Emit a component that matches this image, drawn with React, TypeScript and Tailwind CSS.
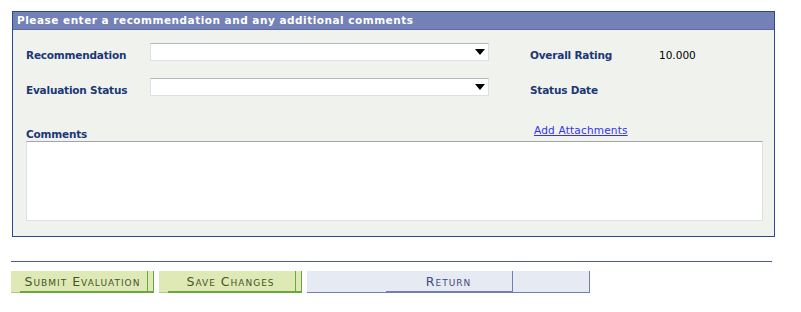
import React from "react";

const font = { fontFamily: '"DejaVu Sans", Verdana, sans-serif' };

function Select() {
  return (
    <div className="relative w-[339px] h-[18px] bg-white border border-[#dcdfe3] border-t-[#b4b8be]">
      <svg className="absolute right-[3px] top-[5px]" width="10" height="6" viewBox="0 0 10 6">
        <path d="M0 0 H10 L5 6 Z" fill="#000" />
      </svg>
    </div>
  );
}

const label = "text-[10.5px] leading-[13px] font-bold text-[#1c3776] tracking-[-0.2px]";

function GreenButton({ text }: { text: string }) {
  return (
    <div className="grid grid-cols-[9px_128px_6px] h-[22px] bg-[#dfe9b6]">
      <div className="row-start-1 col-start-1 border-b border-[#a9cc88]" />
      <div className="row-start-1 col-start-2 border-b-2 border-r border-[#6aa83c]" />
      <div className="row-start-1 col-start-3 border-b-2 border-r border-[#6aa83c]" />
      <div className="row-start-1 col-start-1 col-span-3 flex items-center justify-center pt-[1px] text-[#44552a]">
        {text}
      </div>
    </div>
  );
}

export default function App() {
  return (
    <div className="w-[801px] h-[312px] bg-white pt-[11px]" style={font}>
      <div className="ml-[12px] w-[763px] border border-[#284a8c] bg-[#f0f2ee]">
        <div className="h-[18px] bg-[#7481b6] border-b border-[#5c6aa0] pl-[4px] text-[10.5px] leading-[17px] font-bold text-white tracking-[0.5px]">
          Please enter a recommendation and any additional comments
        </div>

        <div className="pl-[13px] pr-[11px] pt-[13px] pb-[15px]">
          <div className="flex items-start">
            <span className={`w-[124px] mt-[6px] ${label}`}>Recommendation</span>
            <Select />
            <span className={`ml-[41px] mt-[6px] w-[129px] ${label}`}>Overall Rating</span>
            <span className="mt-[6px] text-[10.5px] leading-[13px] text-black">10.000</span>
          </div>
          <div className="flex items-start mt-[16px]">
            <span className={`w-[124px] mt-[6px] ${label}`}>Evaluation Status</span>
            <Select />
            <span className={`ml-[41px] mt-[6px] ${label}`}>Status Date</span>
          </div>

          <div className="flex items-end h-[44px]">
            <span className={`w-[508px] ${label}`}>Comments</span>
            <a href="#" className="mb-[4px] text-[10.5px] text-[#3333ee] underline leading-[13px] tracking-[0.2px]">
              Add Attachments
            </a>
          </div>
          <div className="w-[737px] h-[80px] bg-white border border-[#dcdfe3] border-t-[#a2a6ab]" />
        </div>
      </div>

      <div className="ml-[11px] mt-[24px] w-[761px] h-px bg-[#4c5a90]" />

      <div className="flex ml-[11px] mt-[9px] text-[12.5px] tracking-[1px]" style={{ fontVariant: "small-caps" }}>
        <GreenButton text="Submit Evaluation" />
        <div className="ml-[5px]">
          <GreenButton text="Save Changes" />
        </div>
        <div className="ml-[5px] grid grid-cols-[79px_127px_77px] h-[22px] bg-[#e6ebf3]">
          <div className="row-start-1 col-start-1 border-b border-[#6f7fb5]" />
          <div className="row-start-1 col-start-2 border-b-2 border-r border-[#6f7fb5]" />
          <div className="row-start-1 col-start-3 border-b border-r border-[#6f7fb5]" />
          <div className="row-start-1 col-start-1 col-span-3 flex items-center justify-center pt-[1px] text-[#3f4a80]">
            Return
          </div>
        </div>
      </div>
    </div>
  );
}
